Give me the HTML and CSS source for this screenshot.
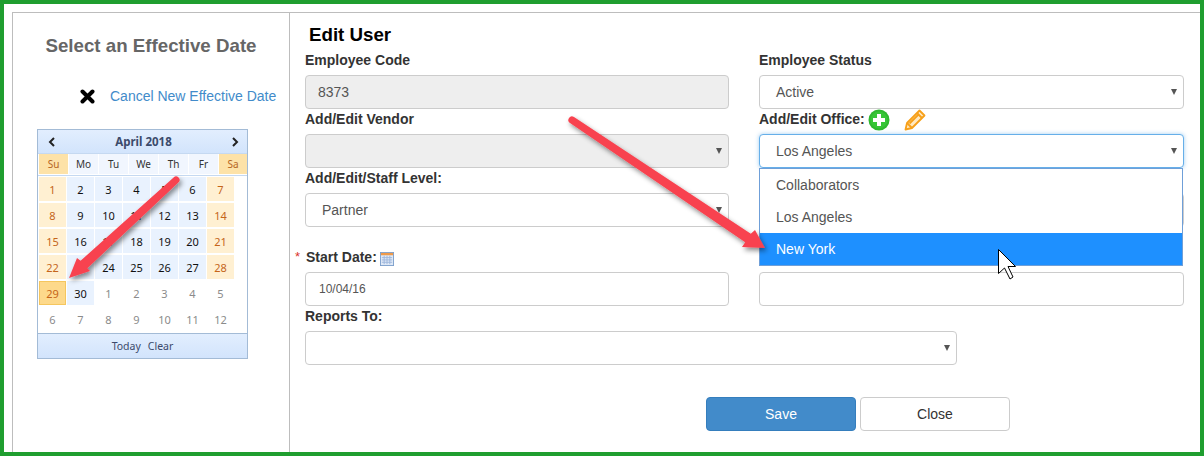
FILE: index.html
```html
<!DOCTYPE html>
<html lang="en">
<head>
<meta charset="utf-8">
<title>Edit User</title>
<link rel="stylesheet" href="styles.css">
</head>
<body>
<div class="frame">
  <div class="panel">
    <aside class="side">
      <h2 class="side-title">Select an Effective Date</h2>
      <div class="cancel">
        <svg class="cancel-x" width="15" height="15" viewBox="0 0 15 15"><path d="M2.5 2.5 12.5 12.5M12.5 2.5 2.5 12.5" stroke="#000" stroke-width="4" stroke-linecap="round"/></svg>
        <a class="cancel-link">Cancel New Effective Date</a>
      </div>
      <div class="cal">
        <div class="cal-head">
          <svg width="8" height="10" viewBox="0 0 8 10"><path d="M6 1 2 5l4 4" fill="none" stroke="#222" stroke-width="2"/></svg>
          <span class="cal-month">April 2018</span>
          <svg width="8" height="10" viewBox="0 0 8 10"><path d="M2 1l4 4-4 4" fill="none" stroke="#222" stroke-width="2"/></svg>
        </div>
        <div class="cal-dow">
          <span class="dow we">Su</span><span class="dow">Mo</span><span class="dow">Tu</span><span class="dow">We</span><span class="dow">Th</span><span class="dow">Fr</span><span class="dow we">Sa</span>
        </div>
        <div class="cal-days">
          <span class="d wk">1</span><span class="d">2</span><span class="d">3</span><span class="d">4</span><span class="d">5</span><span class="d">6</span><span class="d wk">7</span>
          <span class="d wk">8</span><span class="d">9</span><span class="d">10</span><span class="d">11</span><span class="d">12</span><span class="d">13</span><span class="d wk">14</span>
          <span class="d wk">15</span><span class="d">16</span><span class="d">17</span><span class="d">18</span><span class="d">19</span><span class="d">20</span><span class="d wk">21</span>
          <span class="d wk">22</span><span class="d">23</span><span class="d">24</span><span class="d">25</span><span class="d">26</span><span class="d">27</span><span class="d wk">28</span>
          <span class="d sel">29</span><span class="d">30</span><span class="d out">1</span><span class="d out">2</span><span class="d out">3</span><span class="d out">4</span><span class="d out">5</span>
          <span class="d out">6</span><span class="d out">7</span><span class="d out">8</span><span class="d out">9</span><span class="d out">10</span><span class="d out">11</span><span class="d out">12</span>
        </div>
        <div class="cal-foot"><span>Today</span><span>Clear</span></div>
      </div>
    </aside>
    <main class="main">
      <h1 class="title">Edit User</h1>
      <div class="form">
        <div class="field">
          <label class="lbl">Employee Code</label>
          <div class="ctl disabled plain">8373</div>
        </div>
        <div class="field">
          <label class="lbl">Employee Status</label>
          <div class="ctl select">Active</div>
        </div>
        <div class="field">
          <label class="lbl">Add/Edit Vendor</label>
          <div class="ctl select disabled">&nbsp;</div>
        </div>
        <div class="field dd-host">
          <label class="lbl"><span>Add/Edit Office:</span><svg class="plus" width="22" height="22" viewBox="0 0 22 22"><circle cx="11" cy="11" r="10.5" fill="#2eb82e"/><circle cx="11" cy="11" r="8.5" fill="#35c535"/><path d="M11 5v12M5 11h12" stroke="#fff" stroke-width="4"/></svg><svg class="pencil" width="22" height="22" viewBox="0 0 22 22"><path d="M1.5 20.5 3 14 15.5 1.5l5 5L8 19Z" fill="#ffe9c2" stroke="#f7a01a" stroke-width="1.8" stroke-linejoin="round"/><path d="M3 14l5 5M13 4l5 5M5.5 14.5 15 5" fill="none" stroke="#f7a01a" stroke-width="1.8"/></svg></label>
          <div class="ctl select focus">Los Angeles</div>
          <ul class="dropdown">
            <li class="opt">Collaborators</li>
            <li class="opt">Los Angeles</li>
            <li class="opt hot">New York</li>
          </ul>
        </div>
        <div class="field">
          <label class="lbl">Add/Edit/Staff Level:</label>
          <div class="ctl select">Partner</div>
        </div>
        <div class="field">
          <label class="lbl">&nbsp;</label>
          <div class="ctl">&nbsp;</div>
        </div>
        <div class="field date-row">
          <label class="lbl"><span class="req">*</span><span>Start Date:</span><svg class="calicon" width="14" height="14" viewBox="0 0 15 15"><rect x=".5" y=".5" width="14" height="14" fill="#dfe9f7" stroke="#7d9fcc"/><rect x="1" y="1" width="13" height="2.5" fill="#ef9a4a"/><path d="M2 6h11M2 8.5h11M2 11h11M4.500 4v9M7.500 4v9M10.500 4v9" stroke="#9db6dc"/></svg></label>
          <div class="ctl date">10/04/16</div>
        </div>
        <div class="field date-row">
          <label class="lbl">&nbsp;</label>
          <div class="ctl">&nbsp;</div>
        </div>
        <div class="field wide">
          <label class="lbl">Reports To:</label>
          <div class="ctl select">&nbsp;</div>
        </div>
      </div>
      <div class="actions">
        <button class="btn save">Save</button>
        <button class="btn close">Close</button>
      </div>
    </main>
  </div>
  <svg class="overlay" width="1204" height="456" viewBox="0 0 1204 456">
    <defs>
      <filter id="sh" x="-20%" y="-20%" width="140%" height="140%"><feDropShadow dx="2" dy="3" stdDeviation="2.500" flood-color="#000" flood-opacity=".45"/></filter>
    </defs>
    <g filter="url(#sh)" fill="#f8434f">
      <path d="M570 123 745.200 242.200 742 247 765 248 755 230 750.800 233.800 574 117A3.500 3.500 0 0 0 570 123Z"/>
      <path d="M173.600 177.400 80.600 260.800 77 258 69 278 90 271 87.400 268.200 178.400 182.600A3.500 3.500 0 0 0 173.600 177.400Z"/>
    </g>
    <path d="M998.500 249.500 1015.500 266.500H1008L1013 277 1010 279 1004.500 268 998.500 273.500Z" fill="#fff" stroke="#000" stroke-width="1"/>
  </svg>
</div>
</body>
</html>
```
FILE: styles.css
```css
* { box-sizing: border-box; }
html, body { margin: 0; padding: 0; }
body { width: 1204px; height: 456px; overflow: hidden; background: #fff; font-family: "Liberation Sans", Arial, sans-serif; font-size: 14px; color: #333; }
.frame { position: relative; width: 1204px; height: 456px; border: 4px solid #1f9e2f; padding: 8px 0 0 8px; background: #fff; }
.panel { display: flex; height: 100%; border-top: 1px solid #bdbdbd; border-left: 1px solid #bdbdbd; }
.side { width: 277px; flex: none; border-right: 1px solid #bdbdbd; padding-top: 22px; }
.side-title { margin: 0; height: 21px; line-height: 21px; font-size: 18.720px; font-weight: bold; color: #666; text-align: center; white-space: nowrap; }
.cancel { display: flex; align-items: center; margin: 30px 0 0 67px; height: 20px; gap: 15px; }
.cancel-link { color: #428bca; font-size: 14px; white-space: nowrap; }
.cal { width: 211px; height: 230px; margin: 23px 0 0 24px; border: 1px solid #a3bbd6; font-family: "Noto Sans", Tahoma, sans-serif; font-size: 11px; display: flex; flex-direction: column; }
.cal-head { height: 24px; display: flex; align-items: center; justify-content: space-between; padding: 0 8px 0 10px; background: linear-gradient(#e2eefe, #d2e4fc); border-bottom: 1px solid #c5d9f1; }
.cal-month { font-weight: bold; color: #3b4a6b; font-size: 11.500px; }
.cal-dow { display: grid; grid-template-columns: 29px 29px 29px 29px 29px 29px 28px; column-gap: 1px; height: 22px; padding: 0 0 0 1px; border-bottom: 1px solid #c5d9f1; }
.dow { display: flex; align-items: center; justify-content: center; height: 20px; background: #f1f6fe; color: #333; font-size: 10px; }
.dow.we { background: #fde2a8; color: #b5651d; }
.cal-days { display: grid; grid-template-columns: repeat(7, 27px); grid-auto-rows: 24px; gap: 2px 1px; padding: 1px 0 0 1px; flex: 1; }
.d { display: flex; align-items: center; justify-content: center; background: #e9f2fe; color: #111; }
.d.wk { background: #fff0d2; color: #c5651a; }
.d.sel { background: #fdd98b; border: 1px solid #f5c65e; color: #c5651a; }
.d.out { background: #fff; color: #8b8b8b; }
.cal-foot { height: 25px; display: flex; align-items: center; justify-content: center; gap: 7px; color: #3b4a6b; font-size: 10.500px; background: linear-gradient(#e2eefe, #d2e4fc); border-top: 1px solid #a3bbd6; }
.main { flex: 1; padding: 0 0 0 15px; min-width: 0; }
.title { margin: 11px 0 0 4px; height: 22px; line-height: 22px; font-size: 18.720px; font-weight: bold; color: #000; }
.form { display: grid; grid-template-columns: 424px 425px; column-gap: 30px; margin-top: 4px; }
.field { position: relative; }
.lbl { display: flex; align-items: flex-start; height: 25px; padding-top: 2px; line-height: 16px; font-weight: bold; font-size: 14px; color: #333; white-space: nowrap; }
.ctl { height: 34px; border: 1px solid #ccc; border-radius: 4px; background: #fff; padding: 0 16px; display: flex; align-items: center; justify-content: space-between; color: #555; font-size: 14px; }
.ctl.plain { padding-left: 12px; }
.ctl.date { padding-left: 13px; font-size: 12px; }
.ctl.disabled { background: #eee; }
.ctl.select { padding-right: 6px; }
.ctl.select::after { content: ""; width: 0; height: 0; border-left: 3.500px solid transparent; border-right: 3.500px solid transparent; border-top: 6px solid #555; }
.ctl.focus { border-color: #66afe9; box-shadow: 0 0 4px rgba(102, 175, 233, .6); }
.date-row { margin-top: 20px; }
.wide { grid-column: 1 / -1; width: 652px; }
.plus { margin: -2px 0 0 3px; }
.pencil { margin: -2px 0 0 14px; }
.calicon { margin: 3px 0 0 3px; }
.req { margin-left: -10px; width: 11px; color: #d9342b; font-weight: normal; font-size: 13px; }
.dropdown { position: absolute; z-index: 2; top: 59px; left: 0; width: 424px; height: 98px; margin: 0; padding: 0; list-style: none; background: #fff; border: 1px solid #6f9fd8; }
.opt { height: 32px; line-height: 32px; padding-left: 16px; color: #555; }
.opt.hot { background: #1e90ff; color: #fff; }
.actions { display: flex; gap: 4px; margin: 32px 0 0 401px; }
.btn { width: 150px; height: 34px; border-radius: 4px; font: 14px "Liberation Sans", Arial, sans-serif; padding: 0; }
.save { background: #428bca; border: 1px solid #357ebd; color: #fff; }
.close { background: #fff; border: 1px solid #ccc; color: #333; }
.overlay { position: absolute; z-index: 3; left: -4px; top: -4px; pointer-events: none; }
```
